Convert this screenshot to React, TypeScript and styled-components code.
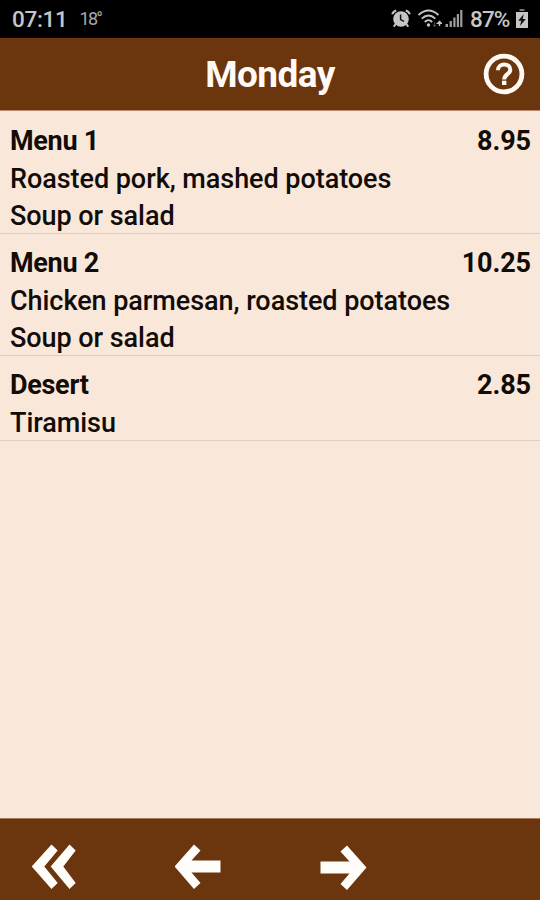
import React from "react";
import styled, { createGlobalStyle } from "styled-components";

const GlobalStyle = createGlobalStyle`
  html, body { margin: 0; padding: 0; }
  body { background: #f9e7da; font-family: Roboto, sans-serif; }
  *, *::before, *::after { box-sizing: border-box; }
  svg { display: block; flex: none; }
`;

const Screen = styled.div`
  width: 540px;
  height: 900px;
  display: flex;
  flex-direction: column;
  overflow: hidden;
  background: #f9e7da;
  color: #120c09;
`;

const StatusBar = styled.div`
  height: 38px;
  flex: none;
  display: flex;
  align-items: center;
  padding: 0 12px 1px;
  background: #000;
  color: #c6c6c6;
`;

const Clock = styled.span`
  font-size: 22.5px;
  font-weight: 500;
  line-height: 26px;
  letter-spacing: -0.3px;
  white-space: nowrap;
`;

const Temperature = styled.span`
  margin-left: 12px;
  font-size: 18px;
  line-height: 26px;
  letter-spacing: -1.8px;
  color: #a8a8a8;
`;

const StatusIcons = styled.div`
  display: flex;
  align-items: center;
  margin-left: auto;
`;

const ConnectionIcons = styled.div`
  display: flex;
  align-items: center;
  margin-left: 7px;
  gap: 3px;
`;

const Battery = styled.span`
  margin: 0 4px 0 7px;
  font-size: 22.5px;
  font-weight: 500;
  line-height: 26px;
  width: 42px;
  letter-spacing: -0.9px;
  white-space: nowrap;
`;

const Header = styled.header`
  height: 73px;
  flex: none;
  display: grid;
  grid-template-columns: 57px 1fr 57px;
  align-items: center;
  background: #6b350e;
  border-bottom: 1px solid #b98a6c;
  color: #fffaf5;
`;

const Title = styled.h1`
  grid-column: 2;
  margin: 0;
  padding-top: 2px;
  text-align: center;
  font-size: 37px;
  line-height: 44px;
  font-weight: 700;
  letter-spacing: -0.6px;
`;

const HelpButton = styled.button`
  border: 0;
  padding: 0;
  background: none;
  color: inherit;
`;

const MenuList = styled.main`
  flex: 1;
  padding-top: 1px;
`;

const MenuItem = styled.section`
  padding: 11px 10px 0;
  border-bottom: 1px solid #e0cec3;
`;

const ItemHeading = styled.div`
  display: flex;
  justify-content: space-between;
  font-size: 27px;
  line-height: 37.5px;
  font-weight: 700;
`;

const ItemName = styled.span`
  letter-spacing: -0.3px;
`;

const Price = styled.span`
  margin-right: -1px;
  letter-spacing: -0.1px;
`;

const ItemLine = styled.div`
  font-size: 27px;
  line-height: 37.5px;
  font-weight: 500;
  letter-spacing: -0.05px;
  white-space: nowrap;

  &:last-child {
    margin-bottom: -2.5px;
  }
`;

const Footer = styled.footer`
  height: 82px;
  flex: none;
  display: flex;
  align-items: flex-start;
  gap: 97px;
  padding: 25px 0 0 30px;
  background: #6b350e;
  border-top: 1px solid #a57c60;
`;

const NavButton = styled.button`
  width: 48px;
  height: 50px;
  padding: 0;
  border: 0;
  background: none;
  color: #fffdfa;
`;

const items = [
  { name: "Menu 1", price: "8.95", lines: ["Roasted pork, mashed potatoes", "Soup or salad"] },
  { name: "Menu 2", price: "10.25", lines: ["Chicken parmesan, roasted potatoes", "Soup or salad"] },
  { name: "Desert", price: "2.85", lines: ["Tiramisu"] },
];

const AlarmIcon = () => (
  <svg width="20" height="20" viewBox="0 0 20 20" fill="none" stroke="currentColor">
    <circle cx="10" cy="10" r="7.8" fill="currentColor" stroke="none" />
    <path d="M1.2 5.2Q2 2.500 5.200 1.500M18.800 5.200Q18 2.500 14.800 1.500M4.600 15 2.800 17.800M15.400 15l1.800 2.800" strokeWidth="2" />
    <path d="M9.600 5.600v5l3.400 1.800" stroke="#111" strokeWidth="1.500" />
  </svg>
);

const WifiIcon = () => (
  <svg width="24" height="20" viewBox="0 0 24 20" fill="none" stroke="currentColor" strokeWidth="1.900">
    <path d="M.5 6Q10.500 -3 20.500 6M3.700 9.600Q10.500 3.300 17.300 9.600M6.800 13Q10.500 9.200 14.200 13" />
    <circle cx="10.500" cy="16" r="1.700" fill="currentColor" stroke="none" />
    <path d="M16.500 13.500v4M14.800 16l1.700 1.700 1.700-1.700" stroke="#555" strokeWidth="1" />
    <path d="M21.500 17v-5M19.800 14.200l1.700-1.700 1.700 1.700z" strokeWidth="1.500" />
  </svg>
);

const SignalIcon = () => (
  <svg width="18" height="19" viewBox="0 0 18 19" fill="currentColor">
    <path d="M.5 15h2.500v3H.5zM4.600 12h2.300v6H4.600zM8.300 8.500h2.200V18H8.300zM11.800 5H14v13h-2.200zM15.200 1h2.200v17h-2.200z" opacity=".8" />
  </svg>
);

const BatteryIcon = () => (
  <svg width="12" height="19" viewBox="0 0 12 19">
    <path d="M3.500 0h5v2h-5z" fill="#777" />
    <path d="M0 3h12v16H0z" fill="currentColor" />
    <path d="M7.800 5 2.200 11.700h3L4 17l5.800-7H6.700z" fill="#111" />
  </svg>
);

const HelpIcon = () => (
  <svg width="42" height="42" viewBox="0 0 42 42" fill="none" stroke="currentColor">
    <circle cx="21" cy="21" r="17.900" strokeWidth="4.800" />
    <path d="M14.900 17.300C14.900 9.600 27.300 9.600 27.300 16.700C27.300 21.400 21.200 21 21.200 26.500" strokeWidth="4" />
    <path d="M21.200 27.700v4.300" strokeWidth="4.400" />
  </svg>
);

const DoubleLeftIcon = () => (
  <svg width="48" height="50" viewBox="0 0 48 50" fill="currentColor">
    <path d="M1.700 22.500 21.500.500l6.200 6L14.300 22.500l13.400 16.500-6.200 6zM20.700 22.500 39.500.500l6.200 6L33.300 22.500l12.400 16.500-6.200 6z" />
  </svg>
);

const LeftIcon = () => (
  <svg width="48" height="50" viewBox="0 0 48 50" fill="currentColor">
    <path d="M-.5 22.500 19 .500l6.500 6L16.500 16.500h29v12h-29l9 10.500-6.500 6z" />
  </svg>
);

const RightIcon = () => (
  <svg width="48" height="50" viewBox="0 0 48 50" fill="currentColor">
    <path d="M46.500 23.500 27 1.500l-6.500 6 9 10H.5v12h29l-9 10.500 6.500 6z" />
  </svg>
);

export default function App() {
  return (
    <>
      <GlobalStyle />
      <Screen>
        <StatusBar>
          <Clock>07:11</Clock>
          <Temperature>18°</Temperature>
          <StatusIcons>
            <AlarmIcon />
            <ConnectionIcons>
              <WifiIcon />
              <SignalIcon />
            </ConnectionIcons>
            <Battery>87%</Battery>
            <BatteryIcon />
          </StatusIcons>
        </StatusBar>
        <Header>
          <Title>Monday</Title>
          <HelpButton aria-label="Help"><HelpIcon /></HelpButton>
        </Header>
        <MenuList>
          {items.map((item) => (
            <MenuItem key={item.name}>
              <ItemHeading>
                <ItemName>{item.name}</ItemName>
                <Price>{item.price}</Price>
              </ItemHeading>
              {item.lines.map((line) => (
                <ItemLine key={line}>{line}</ItemLine>
              ))}
            </MenuItem>
          ))}
        </MenuList>
        <Footer>
          <NavButton aria-label="First day"><DoubleLeftIcon /></NavButton>
          <NavButton aria-label="Previous day"><LeftIcon /></NavButton>
          <NavButton aria-label="Next day"><RightIcon /></NavButton>
        </Footer>
      </Screen>
    </>
  );
}
